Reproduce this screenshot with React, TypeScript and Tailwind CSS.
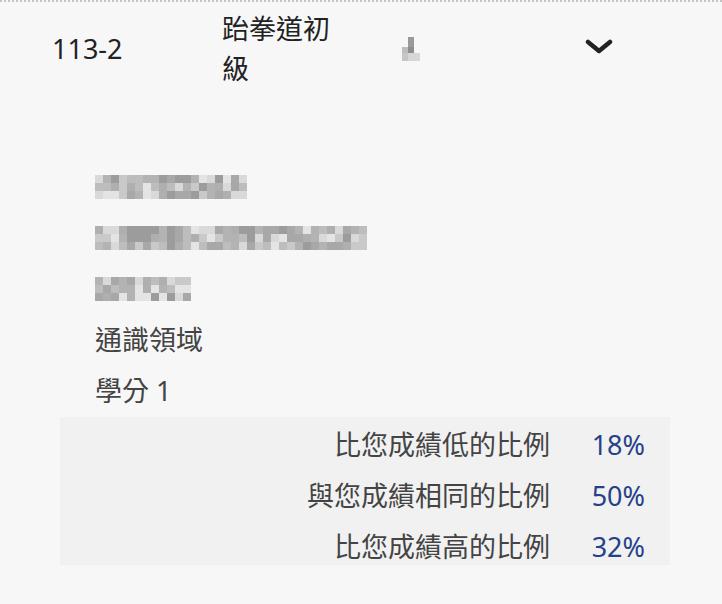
const shades = [
  'bg-[#a8a8a8]',
  'bg-[#bdbdbd]',
  'bg-[#d9d9d9]',
  'bg-[#b3b3b3]',
  'bg-[#9c9c9c]',
  'bg-[#c9c9c9]',
  'bg-[#e4e4e4]',
  'bg-[#afafaf]',
]

// pixelated placeholders for the blurred (redacted) lines
function Redacted({ cols, seed }: { cols: number; seed: number }) {
  const cells = Array.from({ length: cols * 3 }, (_, i) => {
    const h = Math.abs(Math.sin((i + 1) * 12.9898 + seed * 78.233) * 43758.5453)
    return shades[Math.floor((h - Math.floor(h)) * shades.length)]
  })
  return (
    <div className="grid w-fit" style={{ gridTemplateColumns: `repeat(${cols}, 8px)` }}>
      {cells.map((c, i) => (
        <div key={i} className={`h-[8px] ${c}`} />
      ))}
    </div>
  )
}

const stats = [
  { label: '比您成績低的比例', value: '18%' },
  { label: '與您成績相同的比例', value: '50%' },
  { label: '比您成績高的比例', value: '32%' },
]

export default function App() {
  return (
    <div
      className="w-[722px] h-[604px] bg-[#f7f7f7] border-t-2 border-dotted border-[#c4c4c4] overflow-hidden"
      style={{ fontFamily: '"Noto Sans", "Noto Sans CJK TC", sans-serif' }}
    >
      {/* header row */}
      <div className="flex items-center pt-[6px] h-[88px]">
        <div className="w-[222px] pl-[52px] text-[27px] text-[#222]">113-2</div>
        <div className="w-[180px] pr-[60px] text-[27px] leading-[40px] text-[#222]">跆拳道初級</div>
        <div className="w-[183px] -mt-[1px]">
          <div className="flex">
            <div className="w-[6px]" />
            <div className="w-[6px] h-[10px] bg-[#9a9a9a]" />
          </div>
          <div className="flex">
            <div className="w-[6px] h-[6px] bg-[#bdbdbd]" />
            <div className="w-[6px] h-[6px] bg-[#8e8e8e]" />
          </div>
          <div className="flex">
            <div className="w-[6px] h-[8px] bg-[#c6c6c6]" />
            <div className="w-[12px] h-[8px] bg-[#d6d6d6]" />
          </div>
        </div>
        <svg width="28" height="16" viewBox="0 0 28 16" className="-mt-[4px]">
          <polyline points="3,3 14,12 25,3" fill="none" stroke="#222" strokeWidth="4.5" strokeLinecap="round" strokeLinejoin="round" />
        </svg>
      </div>

      {/* details */}
      <div className="pt-[71px] pl-[95px] text-[27px] leading-[51px] text-[#444]">
        <div className="h-[51px] flex items-center">
          <Redacted cols={19} seed={1} />
        </div>
        <div className="h-[51px] flex items-center">
          <Redacted cols={34} seed={2} />
        </div>
        <div className="h-[51px] flex items-center">
          <Redacted cols={12} seed={3} />
        </div>
        <div>通識領域</div>
        <div>學分 1</div>
      </div>

      <div className="mt-[1px] ml-[60px] w-[610px] h-[148px] bg-[#f1f1f1] text-[27px] leading-[51px] pt-[2px]">
        {stats.map(s => (
          <div key={s.label} className="flex justify-end">
            <span className="text-[#444]">{s.label}</span>
            <span className="w-[120px] text-right pr-[25px] text-[#26418a]">{s.value}</span>
          </div>
        ))}
      </div>
    </div>
  )
}
